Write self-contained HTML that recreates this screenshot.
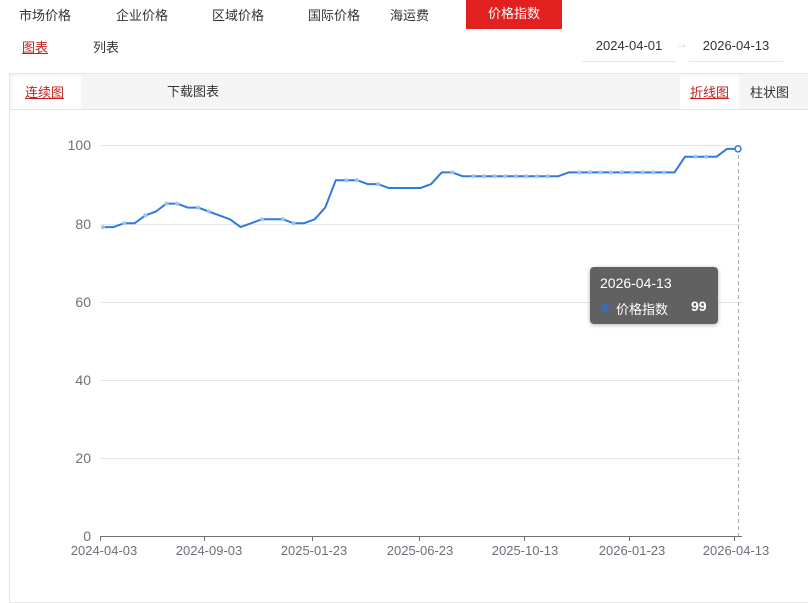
<!DOCTYPE html>
<html><head><meta charset="utf-8"><style>
body{margin:0;width:808px;height:594px;background:#fff;font-family:"Liberation Sans","Noto Sans CJK SC",sans-serif;position:relative;overflow:hidden;color:#333}
.a{position:absolute;white-space:nowrap}
.nav{font-size:13px;color:#333;top:5px}
.red{background:#e0211f;color:#fff;left:466px;top:0;width:96px;height:29px;text-align:center;line-height:28px;font-size:13px}
</style></head><body>
<div class="a nav" style="left:19px">市场价格</div>
<div class="a nav" style="left:116px">企业价格</div>
<div class="a nav" style="left:212px">区域价格</div>
<div class="a nav" style="left:308px">国际价格</div>
<div class="a nav" style="left:390px">海运费</div>
<div class="a red">价格指数</div>
<div class="a" style="left:22px;top:37px;font-size:13px;color:#c0231f;text-decoration:underline">图表</div>
<div class="a" style="left:93px;top:37px;font-size:13px">列表</div>
<div class="a" style="left:582px;top:38px;width:94px;font-size:13px;text-align:center;border-bottom:1px solid #e5e5e5;padding-bottom:8px">2024-04-01</div>
<div class="a" style="left:676px;top:37px;font-size:12px;color:#ccc">→</div>
<div class="a" style="left:689px;top:38px;width:94px;font-size:13px;text-align:center;border-bottom:1px solid #e5e5e5;padding-bottom:8px">2026-04-13</div>
<div class="a" style="left:9px;top:73px;width:800px;height:530px;border:1px solid #e6e6e6;box-sizing:border-box"></div>
<div class="a" style="left:10px;top:74px;width:798px;height:35px;background:#f5f5f5;border-bottom:1px solid #e3e3e3"></div>
<div class="a" style="left:12px;top:76px;width:69px;height:33px;background:#fff"></div>
<div class="a" style="left:25px;top:82px;font-size:13px;color:#c0231f;text-decoration:underline">连续图</div>
<div class="a" style="left:167px;top:81px;font-size:13px">下载图表</div>
<div class="a" style="left:680px;top:76px;width:59px;height:33px;background:#fff"></div>
<div class="a" style="left:690px;top:82px;font-size:13px;color:#c0231f;text-decoration:underline">折线图</div>
<div class="a" style="left:750px;top:82px;font-size:13px">柱状图</div>
<svg class="a" style="left:0;top:0" width="808" height="594">
<g stroke="#e6e6e6" stroke-width="1">
<line x1="100" y1="145.5" x2="742" y2="145.5"/><line x1="100" y1="224.5" x2="742" y2="224.5"/><line x1="100" y1="302.5" x2="742" y2="302.5"/><line x1="100" y1="380.5" x2="742" y2="380.5"/><line x1="100" y1="458.5" x2="742" y2="458.5"/>
</g>
<line x1="100" y1="536.5" x2="742" y2="536.5" stroke="#6e7079"/>
<g stroke="#6e7079"><line x1="100.5" y1="536" x2="100.5" y2="541"/><line x1="204.5" y1="536" x2="204.5" y2="541"/><line x1="312.5" y1="536" x2="312.5" y2="541"/><line x1="419.5" y1="536" x2="419.5" y2="541"/><line x1="524.5" y1="536" x2="524.5" y2="541"/><line x1="629.5" y1="536" x2="629.5" y2="541"/><line x1="734.5" y1="536" x2="734.5" y2="541"/></g>
<line x1="738.5" y1="148" x2="738.5" y2="536" stroke="#aaa" stroke-dasharray="4,3"/>
<g font-size="14" fill="#6e7079" text-anchor="end" font-family="Liberation Sans,sans-serif">
<text x="91" y="150">100</text><text x="91" y="229">80</text><text x="91" y="307">60</text><text x="91" y="385">40</text><text x="91" y="463">20</text><text x="91" y="541">0</text></g>
<g font-size="13" fill="#6e7079" text-anchor="middle" font-family="Liberation Sans,sans-serif">
<text x="104" y="555">2024-04-03</text><text x="209" y="555">2024-09-03</text><text x="314" y="555">2025-01-23</text><text x="420" y="555">2025-06-23</text><text x="525" y="555">2025-10-13</text><text x="632" y="555">2026-01-23</text><text x="736" y="555">2026-04-13</text></g>
<polyline id="ln" fill="none" stroke="#2f7bdc" stroke-width="2" stroke-linejoin="round" points="103,227.1 113.6,227.1 124.2,223.2 134.7,223.2 145.3,215.4 155.9,211.5 166.5,203.6 177.1,203.6 187.7,207.6 198.2,207.6 208.8,211.5 219.4,215.4 230,219.3 240.6,227.1 251.2,223.2 261.7,219.3 272.3,219.3 282.9,219.3 293.5,223.2 304.1,223.2 314.7,219.3 325.2,207.6 335.8,180.2 346.4,180.2 357,180.2 367.6,184.1 378.2,184.1 388.7,188 399.3,188 409.9,188 420.5,188 431.1,184.1 441.7,172.4 452.2,172.4 462.8,176.3 558,176.3 568.7,172.4 674.5,172.4 685,156.7 716.5,156.7 727,148.9 738,148.9"/>
<g fill="#9cc3f0">
<circle cx="103" cy="227.1" r="2"/><circle cx="124.2" cy="223.2" r="2"/><circle cx="145.3" cy="215.4" r="2"/><circle cx="166.5" cy="203.6" r="2"/><circle cx="177.1" cy="203.6" r="2"/><circle cx="198.2" cy="207.6" r="2"/><circle cx="208.8" cy="211.5" r="2"/><circle cx="262" cy="219.3" r="2"/><circle cx="283" cy="219.3" r="2"/><circle cx="293.5" cy="223.2" r="2"/><circle cx="346.4" cy="180.2" r="2"/><circle cx="357" cy="180.2" r="2"/><circle cx="378.2" cy="184.1" r="2"/><circle cx="452.2" cy="172.4" r="2"/><circle cx="473.4" cy="176.3" r="2"/><circle cx="484" cy="176.3" r="2"/><circle cx="494.6" cy="176.3" r="2"/><circle cx="505.1" cy="176.3" r="2"/><circle cx="515.7" cy="176.3" r="2"/><circle cx="526.3" cy="176.3" r="2"/><circle cx="536.9" cy="176.3" r="2"/><circle cx="547.5" cy="176.3" r="2"/><circle cx="579.3" cy="172.4" r="2"/><circle cx="589.9" cy="172.4" r="2"/><circle cx="600.5" cy="172.4" r="2"/><circle cx="611" cy="172.4" r="2"/><circle cx="621.6" cy="172.4" r="2"/><circle cx="632.2" cy="172.4" r="2"/><circle cx="642.8" cy="172.4" r="2"/><circle cx="653.4" cy="172.4" r="2"/><circle cx="664" cy="172.4" r="2"/><circle cx="695.6" cy="156.7" r="2"/><circle cx="706.2" cy="156.7" r="2"/></g>
<circle cx="738" cy="148.9" r="3" fill="#fff" stroke="#2f7bdc" stroke-width="1.5"/>
</svg>
<div class="a" style="left:590px;top:267px;width:128px;height:57px;background:rgba(80,80,80,.9);border-radius:4px;color:#fff;box-shadow:0 1px 4px rgba(0,0,0,.3)">
<div class="a" style="left:10px;top:8px;font-size:14px">2026-04-13</div>
<div class="a" style="left:11px;top:37px;width:8px;height:8px;border-radius:50%;background:#3a6ab0"></div>
<div class="a" style="left:26px;top:32px;font-size:13px">价格指数</div>
<div class="a" style="left:101px;top:31px;font-size:14px;font-weight:bold">99</div>
</div>
</body></html>
